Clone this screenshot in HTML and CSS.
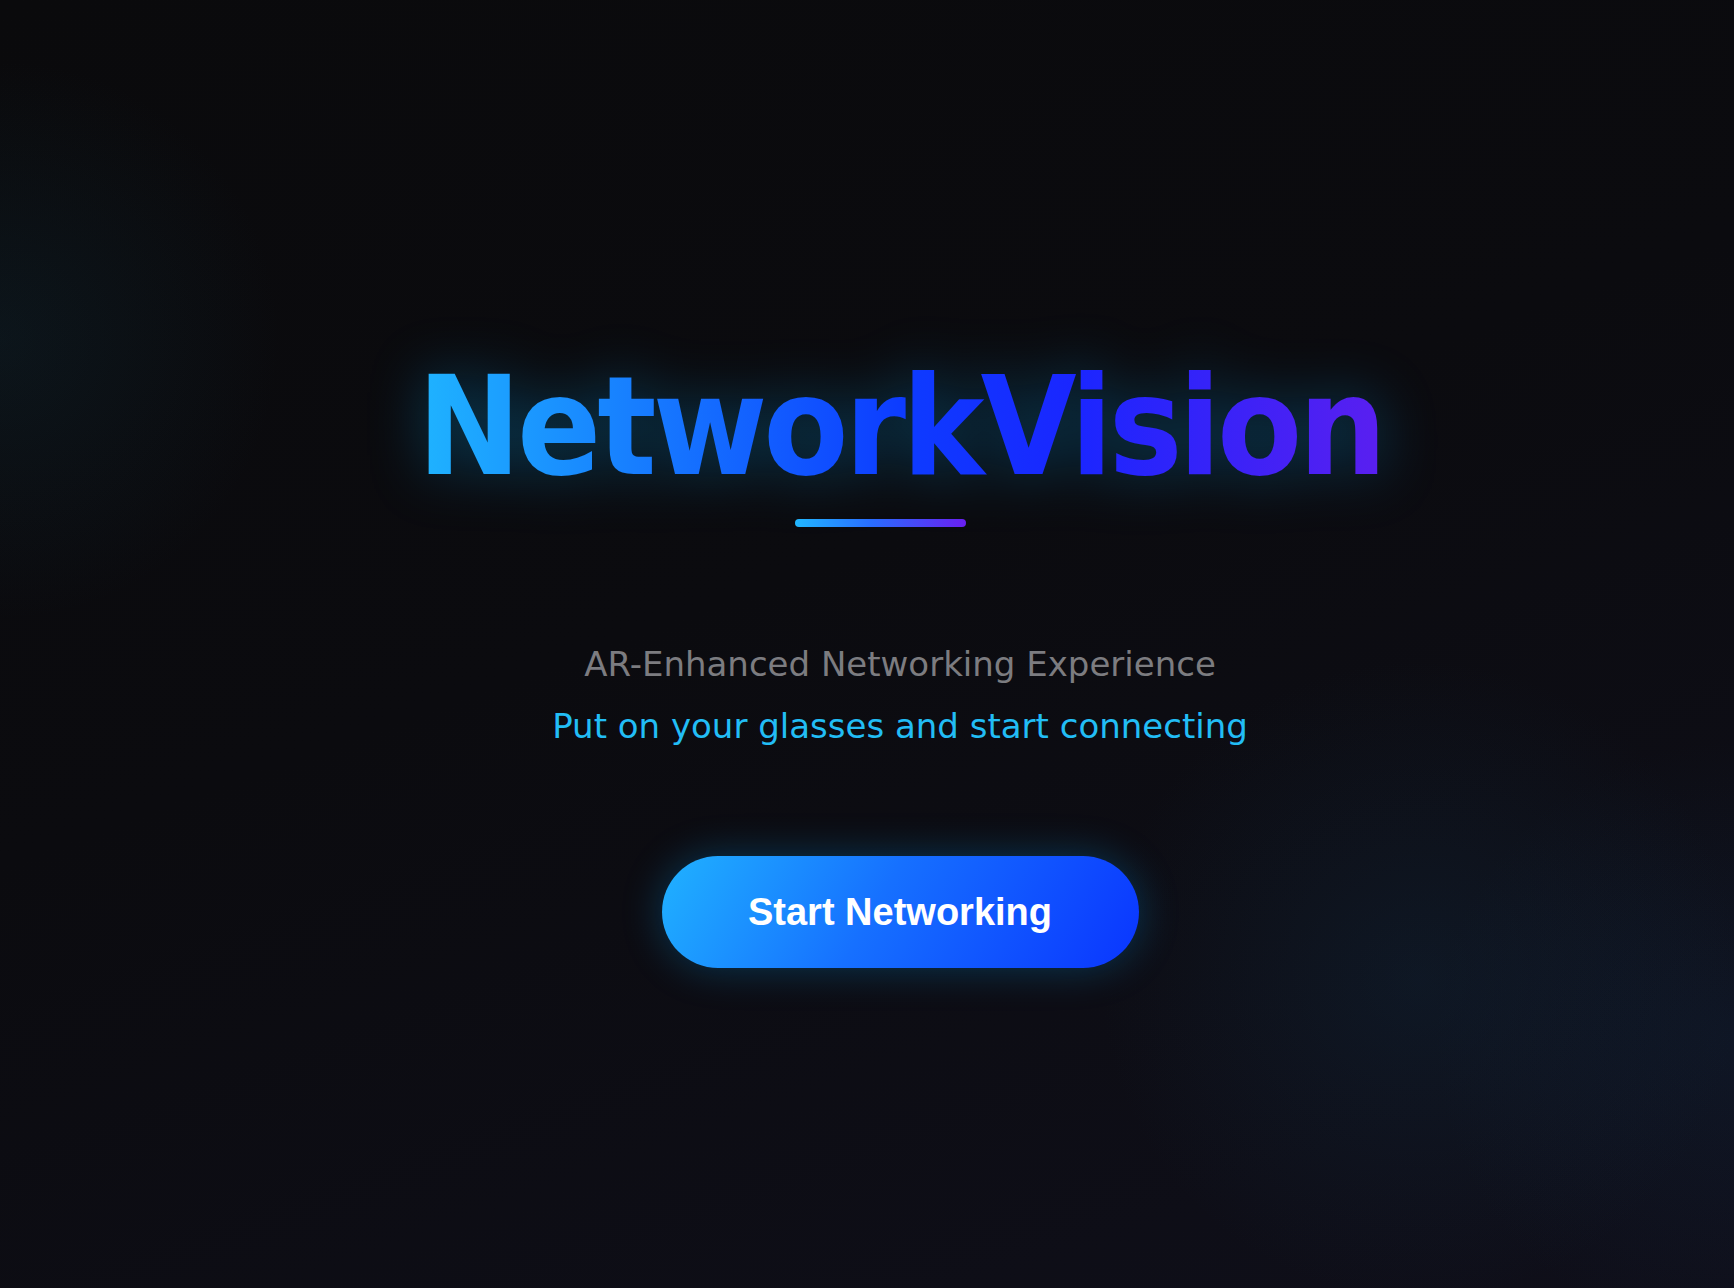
FILE: index.html
```html
<!DOCTYPE html>
<html lang="en">
<head>
<meta charset="utf-8">
<title>NetworkVision</title>
<link rel="stylesheet" href="styles.css">
</head>
<body>
<main class="hero">
  <h1 class="title">NetworkVision</h1>
  <div class="title-bar"></div>
  <p class="tagline">AR-Enhanced Networking Experience</p>
  <p class="prompt">Put on your glasses and start connecting</p>
  <button class="cta" type="button">Start Networking</button>
</main>
</body>
</html>
```

FILE: styles.css
```css
html, body {
  margin: 0;
  padding: 0;
}

body {
  min-height: 100vh;
  background-color: #0b0b0f;
  background-image:
    radial-gradient(circle at 1420px 980px, rgba(20, 60, 90, 0.22) 0, rgba(20, 60, 90, 0) 320px),
    radial-gradient(circle at 1734px 1040px, rgba(20, 60, 100, 0.18) 0, rgba(20, 60, 100, 0) 300px),
    radial-gradient(circle at 0px 340px, rgba(20, 70, 90, 0.18) 0, rgba(20, 70, 90, 0) 280px),
    linear-gradient(160deg, #0a0a0c 0%, #0b0b0f 45%, #0f0f1a 100%);
  font-family: "DejaVu Sans", sans-serif;
  overflow: hidden;
}

.hero {
  display: flex;
  flex-direction: column;
  align-items: center;
  padding-top: 358px;
  padding-left: 66px;
  height: 1288px;
  box-sizing: border-box;
}

.title {
  margin: 0;
  font-family: "DejaVu Sans Condensed", "DejaVu Sans", sans-serif;
  font-weight: 700;
  font-size: 138px;
  line-height: 1;
  letter-spacing: -4px;
  background: linear-gradient(90deg, #1fb4ff 0%, #0d3cff 50%, #1a26ff 68%, #5a1ff0 100%);
  -webkit-background-clip: text;
  background-clip: text;
  color: transparent;
  filter: drop-shadow(0 0 28px rgba(0, 170, 255, 0.32));
}

.title-bar {
  width: 171px;
  height: 8px;
  margin-top: 23px;
  margin-right: 40px;
  border-radius: 4px;
  background: linear-gradient(90deg, #22b8ff 0%, #2a6cff 45%, #6a1ff0 100%);
}

.tagline {
  margin: 117px 0 0;
  font-size: 34px;
  line-height: 41px;
  color: #7c7c80;
}

.prompt {
  margin: 21px 0 0;
  font-size: 34px;
  line-height: 41px;
  color: #22bdf5;
}

.cta {
  margin-top: 109px;
  width: 477px;
  height: 112px;
  border: none;
  border-radius: 56px;
  background: linear-gradient(120deg, #20b2ff 0%, #1670ff 45%, #0a35ff 100%);
  color: #ffffff;
  font-family: "Liberation Sans", Arial, sans-serif;
  font-weight: 700;
  font-size: 38px;
  box-shadow: 0 0 40px rgba(0, 170, 255, 0.28);
  cursor: pointer;
}
```
